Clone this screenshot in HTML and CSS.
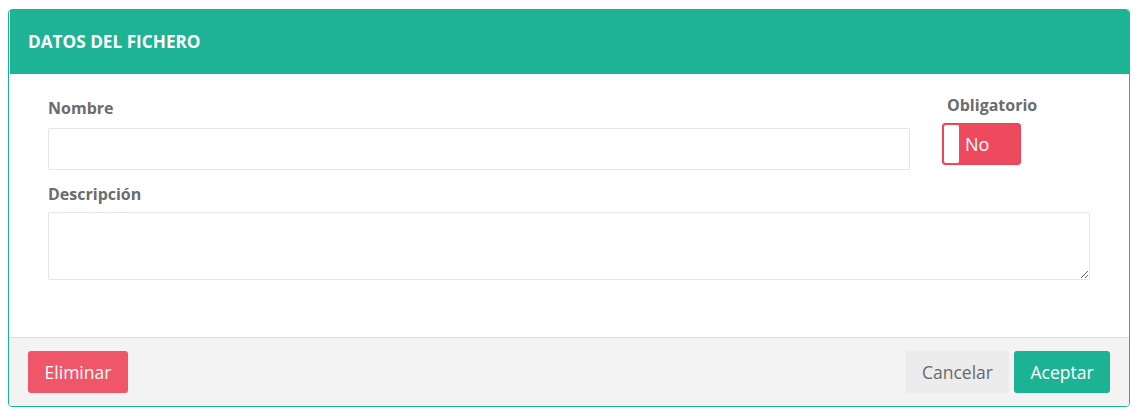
FILE: index.html
```html
<!DOCTYPE html>
<html>
<head>
<meta charset="utf-8">
<link rel="stylesheet" href="styles.css">
</head>
<body>
<div class="panel">
  <div class="panel-heading">DATOS DEL FICHERO</div>
  <div class="panel-body">
    <div class="row">
      <div class="group group-main">
        <label class="label">Nombre</label>
        <input class="input" type="text">
      </div>
      <div class="group group-toggle">
        <label class="label">Obligatorio</label>
        <div class="toggle"><span class="knob"></span><span class="toggle-text">No</span></div>
      </div>
    </div>
    <div class="group group-desc">
      <label class="label">Descripción</label>
      <textarea class="textarea"></textarea>
    </div>
  </div>
  <div class="panel-footer">
    <button class="btn btn-danger">Eliminar</button>
    <div class="actions">
      <button class="btn btn-default">Cancelar</button>
      <button class="btn btn-primary">Aceptar</button>
    </div>
  </div>
</div>
</body>
</html>
```

FILE: styles.css
```css
* { box-sizing: border-box; }
body {
  margin: 0;
  padding: 9px 10px 0 8px;
  font-family: "Open Sans", "Noto Sans", sans-serif;
  background: #fff;
}
.panel {
  width: 1122px;
  border: 1px solid #1ab394;
  border-radius: 4px;
  overflow: hidden;
}
.panel-heading {
  background: #1db394;
  color: #fff;
  font-weight: 700;
  font-size: 17.2px;
  height: 64px;
  line-height: 64px;
  padding-left: 18px;
  margin-left: 1px;
}
.panel-body {
  padding: 24px 39px 57px 39px;
}
.row {
  display: flex;
  align-items: flex-start;
}
.group { display: flex; flex-direction: column; }
.group-main { width: 862px; }
.group-toggle { margin-left: 32px; margin-top: -3px; }
.label {
  color: #6a6c6e;
  font-weight: 700;
  font-size: 16px;
  line-height: 20px;
  padding-left: 0;
  margin-bottom: 10px;
}
.group-toggle .label { padding-left: 5px; margin-bottom: 8px; }
.input {
  height: 42px;
  border: 1px solid #e5e6e7;
  border-radius: 1px;
  outline: none;
  margin: 0;
}
.group-desc { margin-top: 14px; }
.group-desc .label { margin-bottom: 8px; }
.textarea {
  height: 68px;
  border: 1px solid #e5e6e7;
  border-radius: 1px;
  margin: 0;
  resize: vertical;
  font-family: inherit;
}
.toggle {
  width: 79px;
  height: 42px;
  background: #ed4a5e;
  border: 1px solid #e84458;
  border-radius: 3px;
  display: flex;
  align-items: center;
}
.knob {
  width: 17px;
  height: 40px;
  background: #fff;
  border-radius: 3px;
  border: 1px solid #ed4a5e;
}
.toggle-text {
  color: #fff;
  font-size: 18px;
  margin-left: 5px;
}
.panel-footer {
  background: #f3f3f3;
  border-top: 1px solid #dedede;
  padding: 13px 19px 13px 19px;
  display: flex;
  justify-content: space-between;
}
.actions { display: flex; gap: 5px; }
.btn {
  font-family: inherit;
  font-size: 17.5px;
  height: 42px;
  border: none;
  border-radius: 3px;
  padding: 0;
  cursor: pointer;
}
.btn-danger { background: #ef566a; color: #fff; width: 100px; }
.btn-default { background: #ececec; color: #676a6c; width: 103px; }
.btn-primary { background: #1cb394; color: #fff; width: 96px; }
```
